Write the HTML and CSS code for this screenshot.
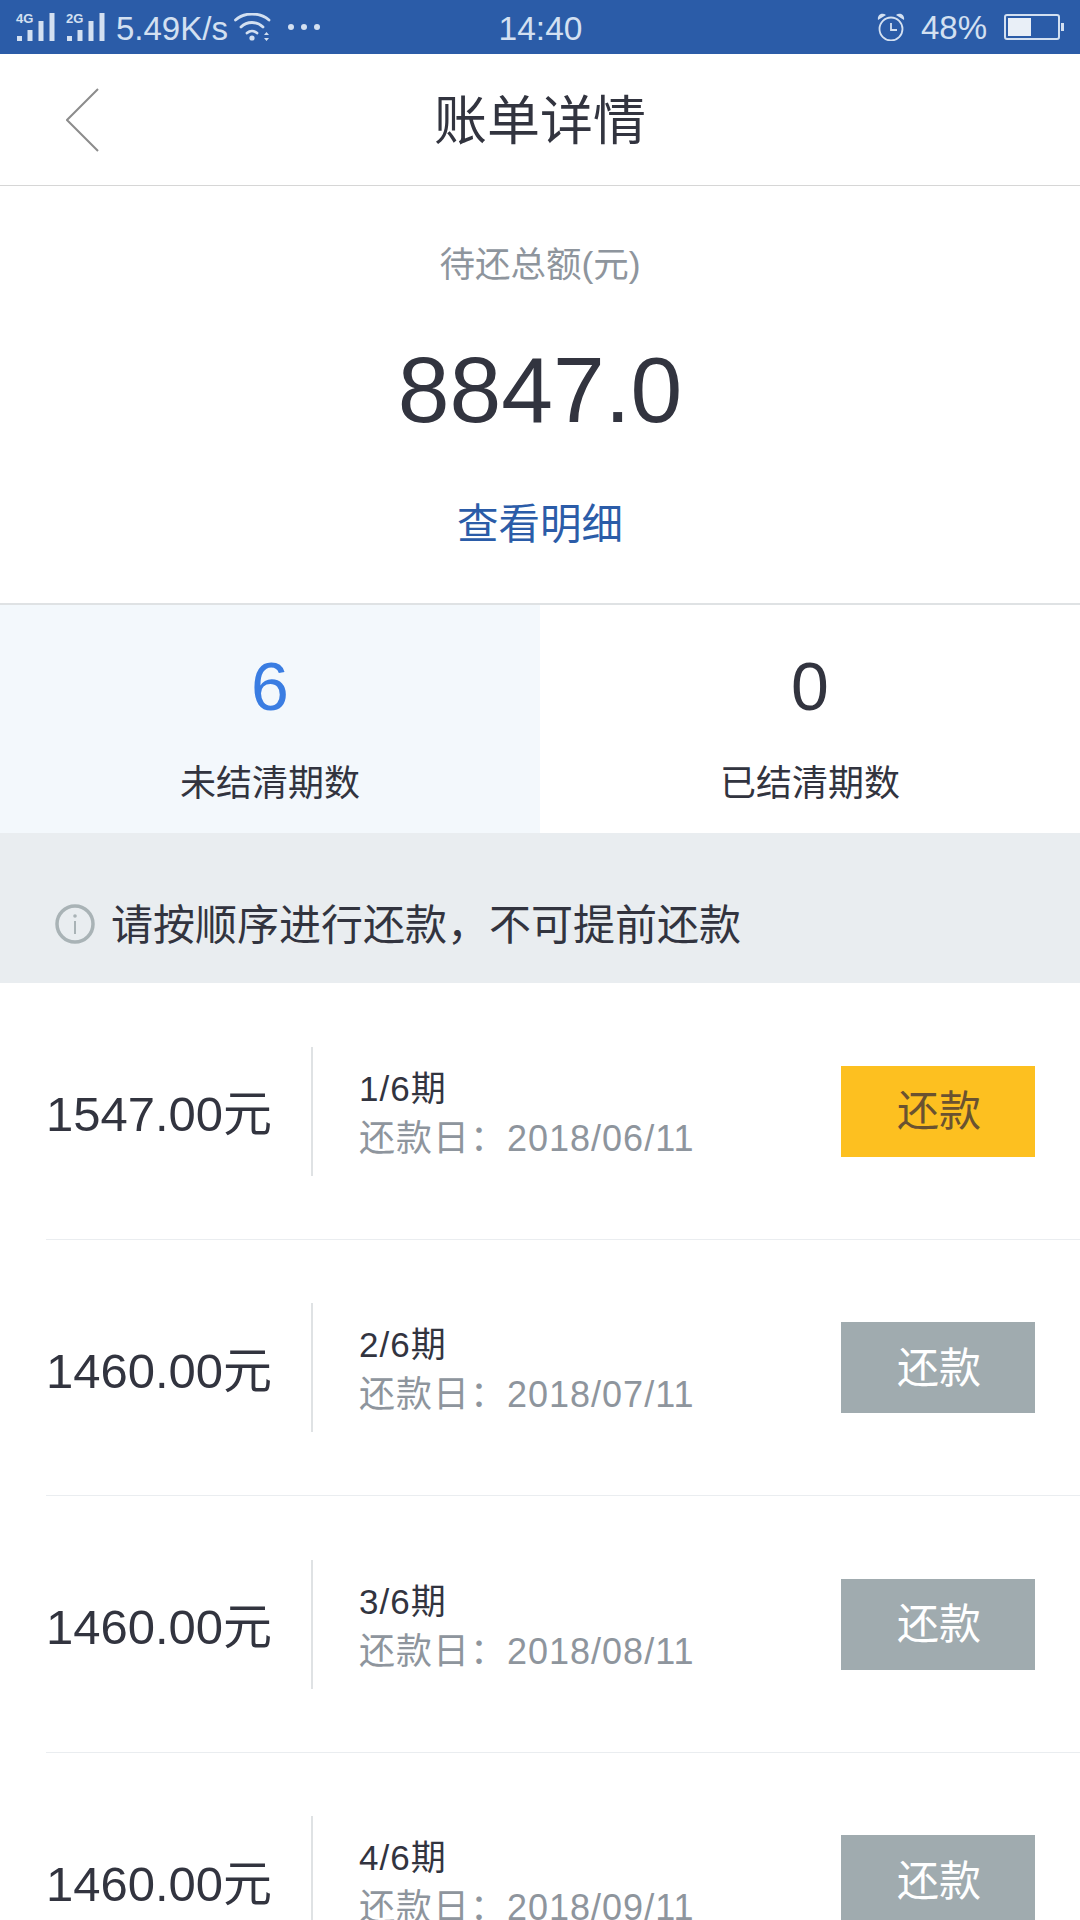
FILE: index.html
```html
<!DOCTYPE html>
<html lang="zh-CN">
<head>
<meta charset="utf-8">
<title>账单详情</title>
<link rel="stylesheet" href="styles.css">
</head>
<body>
<div class="page">
  <header class="status">
    <div class="status-left">
      <div class="sig"><span class="sig-label">4G</span>
        <svg class="sig-bars" viewBox="0 0 38 28" width="38" height="28"><g fill="#d3e0f1"><rect x="0" y="23" width="5" height="5"/><rect x="10.500" y="17" width="5" height="11"/><rect x="21.500" y="8" width="5" height="20"/><rect x="32.500" y="0" width="5" height="28"/></g></svg>
      </div>
      <div class="sig"><span class="sig-label">2G</span>
        <svg class="sig-bars" viewBox="0 0 38 28" width="38" height="28"><g fill="#d3e0f1"><rect x="0" y="23" width="5" height="5"/><rect x="10.500" y="17" width="5" height="11"/><rect x="21.500" y="8" width="5" height="20"/><rect x="32.500" y="0" width="5" height="28"/></g></svg>
      </div>
      <span class="speed">5.49K/s</span>
      <svg class="wifi" viewBox="0 0 38 30" width="38" height="30"><g fill="none" stroke="#d3e0f1" stroke-width="2.800" stroke-linecap="round"><path d="M1.500 7C10 -1 26 -1 35 7"/><path d="M7 14C13 8 23 8 29 14"/><path d="M13 20C16 17.500 20 17.500 23 20"/></g><circle cx="18" cy="25" r="2.600" fill="#d3e0f1"/><path d="M30 22h5l-2.500-3zM30 25h5l-2.500 3z" fill="#d3e0f1"/></svg>
      <div class="dots"><i></i><i></i><i></i></div>
    </div>
    <div class="time">14:40</div>
    <div class="status-right">
      <svg class="alarm" viewBox="0 0 28 28" width="28" height="28"><circle cx="14" cy="16" r="11.500" fill="none" stroke="#d3e0f1" stroke-width="1.800"/><path d="M14 10v7h6" fill="none" stroke="#d3e0f1" stroke-width="1.800"/><path d="M1 7C0 2 5 -1 9 2zM27 7C28 2 23 -1 19 2z" fill="#d3e0f1"/></svg>
      <span class="pct">48%</span>
      <div class="battery"><div class="battery-body"><div class="battery-fill"></div></div><div class="battery-tip"></div></div>
    </div>
  </header>

  <nav class="nav">
    <svg class="back" viewBox="0 0 34 66" width="34" height="66"><path d="M32 2L1 33L32 64" fill="none" stroke="#8c8c8c" stroke-width="2"/></svg>
    <h1 class="title">账单详情</h1>
    <span></span>
  </nav>

  <section class="summary">
    <div class="sum-label">待还总额(元)</div>
    <div class="sum-value">8847.0</div>
    <a class="sum-link">查看明细</a>
  </section>

  <section class="tabs">
    <div class="tab tab-on"><div class="tab-num">6</div><div class="tab-label">未结清期数</div></div>
    <div class="tab"><div class="tab-num">0</div><div class="tab-label">已结清期数</div></div>
  </section>

  <section class="notice">
    <svg class="info" viewBox="0 0 40 40" width="40" height="40"><circle cx="20" cy="20" r="18" fill="none" stroke="#a9b3b6" stroke-width="3.500"/><circle cx="20" cy="12" r="1.800" fill="#a9b3b6"/><rect x="19" y="17" width="2" height="13" fill="#a9b3b6"/></svg>
    <span class="notice-text">请按顺序进行还款，不可提前还款</span>
  </section>

  <section class="list">
    <div class="row">
      <div class="amount">1547.00元</div>
      <div class="detail"><div class="period">1/6期</div><div class="due">还款日：2018/06/11</div></div>
      <div class="btn btn-on">还款</div>
    </div>
    <div class="row">
      <div class="amount">1460.00元</div>
      <div class="detail"><div class="period">2/6期</div><div class="due">还款日：2018/07/11</div></div>
      <div class="btn">还款</div>
    </div>
    <div class="row">
      <div class="amount">1460.00元</div>
      <div class="detail"><div class="period">3/6期</div><div class="due">还款日：2018/08/11</div></div>
      <div class="btn">还款</div>
    </div>
    <div class="row">
      <div class="amount">1460.00元</div>
      <div class="detail"><div class="period">4/6期</div><div class="due">还款日：2018/09/11</div></div>
      <div class="btn">还款</div>
    </div>
  </section>
</div>
</body>
</html>
```
FILE: styles.css
```css
* { box-sizing: border-box; }
html, body { margin: 0; padding: 0; background: #fff; }
body { font-family: "Liberation Sans", "Noto Sans CJK SC", sans-serif; color: #32343f; }
.page { width: 1080px; height: 1920px; overflow: hidden; display: flex; flex-direction: column; }

.status { flex: 0 0 54px; background: #2b5ca8; color: #d3e0f1; display: grid; grid-template-columns: 1fr auto 1fr; align-items: center; padding: 0 16px 0 17px; }
.status-left { display: flex; align-items: center; }
.status-right { display: flex; align-items: center; justify-content: flex-end; }
.sig { position: relative; width: 38px; height: 28px; margin-right: 12px; }
.sig-bars { display: block; }
.sig-label { position: absolute; left: -1px; top: -1px; font-size: 13px; line-height: 14px; font-weight: 700; }
.speed { font-size: 33px; line-height: 40px; margin-left: -1px; margin-top: 4px; }
.wifi { margin-left: 6px; margin-top: 2px; display: block; }
.dots { display: flex; gap: 7px; margin-left: 16px; }
.dots i { display: block; width: 6px; height: 6px; border-radius: 50%; background: #d3e0f1; }
.time { font-size: 33.500px; line-height: 40px; margin-top: 3px; }
.alarm { display: block; margin-right: 16px; }
.pct { font-size: 33px; line-height: 40px; margin-right: 17px; margin-top: 2px; }
.battery { display: flex; align-items: center; }
.battery-body { width: 56px; height: 26px; border: 2px solid #d3e0f1; border-radius: 3px; padding: 2px; }
.battery-fill { width: 23px; height: 100%; background: #e9eff7; }
.battery-tip { width: 3px; height: 8px; margin-left: 1px; background: #d3e0f1; }

.nav { flex: 0 0 132px; border-bottom: 1px solid #d6d6d6; display: grid; grid-template-columns: 1fr auto 1fr; align-items: center; padding: 0 66px; }
.back { display: block; }
.title { margin: 4px 0 0; font-size: 53px; line-height: 70px; font-weight: 400; color: #32343f; }

.summary { flex: 0 0 419px; border-bottom: 2px solid #dfe2e4; display: flex; flex-direction: column; align-items: center; }
.sum-label { margin-top: 54px; font-size: 35.500px; line-height: 50px; color: #8e959d; }
.sum-value { margin-top: 45px; font-size: 93px; line-height: 110px; color: #32343f; }
.sum-link { margin-top: 50px; font-size: 41.500px; line-height: 60px; color: #2b5ca8; }

.tabs { flex: 0 0 228px; display: flex; }
.tab { flex: 1 1 0; display: flex; flex-direction: column; align-items: center; }
.tab-on { background: #f3f8fc; }
.tab-num { margin-top: 41px; font-size: 68px; line-height: 80px; color: #32343f; }
.tab-on .tab-num { color: #3a7de2; }
.tab-label { margin-top: 33px; font-size: 36px; line-height: 50px; color: #32343f; }

.notice { flex: 0 0 150px; background: #e9edf0; display: flex; align-items: center; padding: 31px 0 0 55px; font-size: 42px; color: #32343f; }
.info { display: block; margin-right: 16px; }
.notice-text { padding-bottom: 5px; }

.list { flex: 1 1 auto; }
.row { height: 256.5px; margin-left: 46px; padding-top: 1px; border-bottom: 1.500px solid #eaedf0; display: flex; align-items: center; }
.amount { width: 265px; padding-top: 6px; font-size: 49px; line-height: 60px; }
.detail { flex: 1 1 auto; height: 129px; border-left: 2px solid #dfe2e4; padding: 5px 0 0 46px; display: flex; flex-direction: column; justify-content: center; }
.period { font-size: 35px; line-height: 50px; letter-spacing: 1px; }
.due { font-size: 36px; line-height: 50px; letter-spacing: 1px; color: #8e959d; }
.btn { flex: 0 0 194px; height: 91px; margin-right: 45px; padding: 0 0 7px 2px; background: #a0abaf; color: #fff; font-size: 42px; display: flex; align-items: center; justify-content: center; }
.btn-on { background: #fdc020; color: #6a5230; }
```
